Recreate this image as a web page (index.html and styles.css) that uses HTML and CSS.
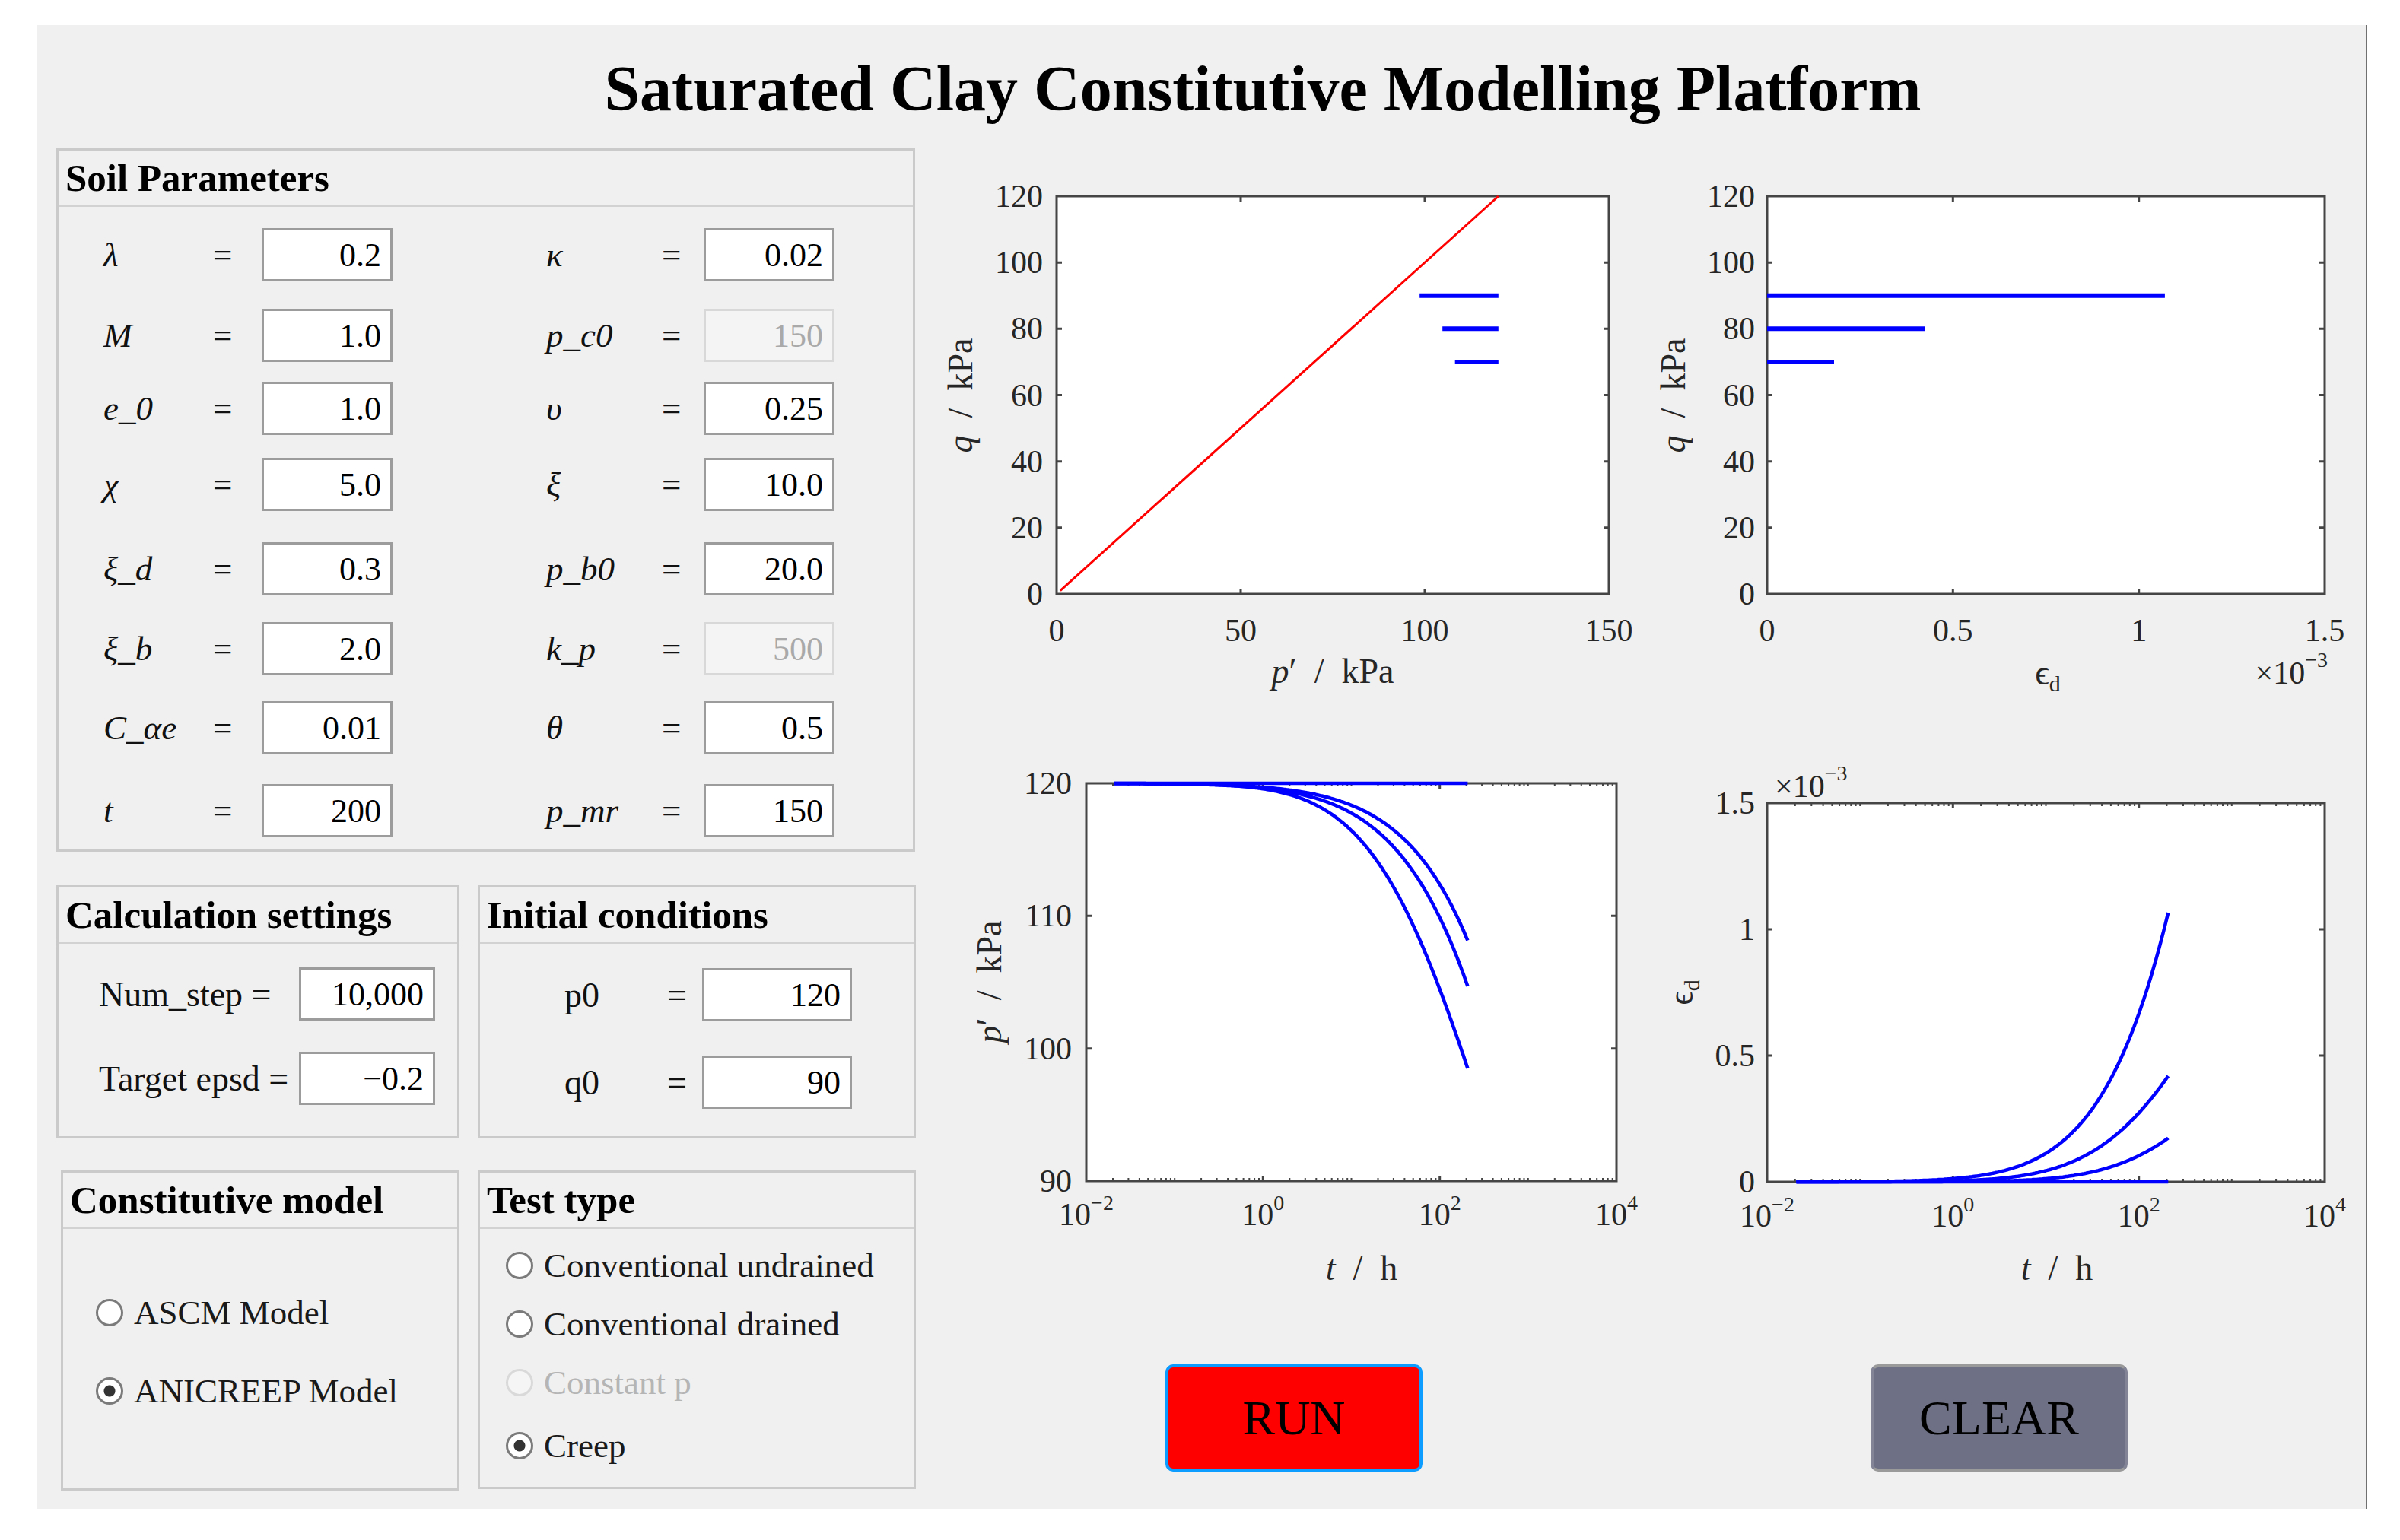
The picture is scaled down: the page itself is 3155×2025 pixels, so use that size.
FILE: index.html
```html
<!DOCTYPE html>
<html lang="en">
<head>
    <meta charset="UTF-8">
    <title>Saturated Clay Constitutive Modelling Platform</title>
    <link rel="stylesheet" href="styles.css">
</head>
<body>
<div class="window">
    <h1 class="title">Saturated Clay Constitutive Modelling Platform</h1>
    <div class="content">
        <div class="left">
            <div class="group soil">
                <div class="group-title">Soil Parameters</div>
                <div class="pgrid">
                    <span class="sym">λ</span><span class="eq">=</span><input class="num" value="0.2">
                    <span class="sym r">κ</span><span class="eq">=</span><input class="num" value="0.02">

                    <span class="sym">M</span><span class="eq">=</span><input class="num" value="1.0">
                    <span class="sym r">p_c0</span><span class="eq">=</span><input class="num" value="150" disabled>

                    <span class="sym">e_0</span><span class="eq">=</span><input class="num" value="1.0">
                    <span class="sym r">υ</span><span class="eq">=</span><input class="num" value="0.25">

                    <span class="sym">χ</span><span class="eq">=</span><input class="num" value="5.0">
                    <span class="sym r">ξ</span><span class="eq">=</span><input class="num" value="10.0">

                    <span class="sym">ξ_d</span><span class="eq">=</span><input class="num" value="0.3">
                    <span class="sym r">p_b0</span><span class="eq">=</span><input class="num" value="20.0">

                    <span class="sym">ξ_b</span><span class="eq">=</span><input class="num" value="2.0">
                    <span class="sym r">k_p</span><span class="eq">=</span><input class="num" value="500" disabled>

                    <span class="sym">C_αe</span><span class="eq">=</span><input class="num" value="0.01">
                    <span class="sym r">θ</span><span class="eq">=</span><input class="num" value="0.5">

                    <span class="sym">t</span><span class="eq">=</span><input class="num" value="200">
                    <span class="sym r">p_mr</span><span class="eq">=</span><input class="num" value="150">
                </div>
            </div>

            <div class="pair">
                <div class="group calc">
                    <div class="group-title">Calculation settings</div>
                    <div class="cgrid">
                        <span class="lbl">Num_step =</span><input class="num wide" value="10,000">
                        <span class="lbl">Target epsd =</span><input class="num wide" value="−0.2">
                    </div>
                </div>
                <div class="group init">
                    <div class="group-title">Initial conditions</div>
                    <div class="igrid">
                        <span class="lbl">p0</span><span class="lbl">=</span><input class="num wider" value="120">
                        <span class="lbl">q0</span><span class="lbl">=</span><input class="num wider" value="90">
                    </div>
                </div>
            </div>

            <div class="pair low">
                <div class="group model">
                    <div class="group-title">Constitutive model</div>
                    <div class="radios model-list">
                        <label class="radio"><input type="radio" name="model">ASCM Model</label>
                        <label class="radio"><input type="radio" name="model" checked>ANICREEP Model</label>
                    </div>
                </div>
                <div class="group test">
                    <div class="group-title">Test type</div>
                    <div class="radios test-list">
                        <label class="radio"><input type="radio" name="test">Conventional undrained</label>
                        <label class="radio"><input type="radio" name="test">Conventional drained</label>
                        <label class="radio off"><input type="radio" name="test" disabled>Constant p</label>
                        <label class="radio last"><input type="radio" name="test" checked>Creep</label>
                    </div>
                </div>
            </div>
        </div>

        <div class="right">
            <div class="plots">
                <!-- q vs p' -->
                <svg class="plot" width="950" height="770" viewBox="0 0 950 770">
                    <rect class="bg" x="174" y="38" width="726" height="523"/>
                    <path class="tick" d="M174 473.8h7M174 386.7h7M174 299.5h7M174 212.3h7M174 125.2h7M900 473.8h-7M900 386.7h-7M900 299.5h-7M900 212.3h-7M900 125.2h-7M416 561v-7M658 561v-7M416 38v7M658 38v7"/>
                    <rect class="box" x="174" y="38" width="726" height="523"/>
                    <g class="ylab" text-anchor="end">
                        <text x="156" y="575">0</text>
                        <text x="156" y="488">20</text>
                        <text x="156" y="401">40</text>
                        <text x="156" y="314">60</text>
                        <text x="156" y="226">80</text>
                        <text x="156" y="139">100</text>
                        <text x="156" y="52">120</text>
                    </g>
                    <g class="xlab" text-anchor="middle">
                        <text x="174" y="623">0</text>
                        <text x="416" y="623">50</text>
                        <text x="658" y="623">100</text>
                        <text x="900" y="623">150</text>
                    </g>
                    <text class="alabel" x="537" y="678" text-anchor="middle"><tspan font-style="italic">p</tspan>′&#160; /&#160; kPa</text>
                    <text class="alabel" transform="translate(63,300) rotate(-90)" text-anchor="middle"><tspan font-style="italic">q</tspan>&#160; /&#160; kPa</text>
                    <path class="red" d="M178.8 556.6L754.8 38"/>
                    <path class="blue thick" d="M651.2 168.8H754.8M681.2 212.3H754.8M697.7 255.9H754.8"/>
                </svg>

                <!-- q vs eps_d -->
                <svg class="plot" width="935" height="770" viewBox="0 0 935 770">
                    <rect class="bg" x="158" y="38" width="733" height="523"/>
                    <path class="tick" d="M158 473.8h7M158 386.7h7M158 299.5h7M158 212.3h7M158 125.2h7M891 473.8h-7M891 386.7h-7M891 299.5h-7M891 212.3h-7M891 125.2h-7M402.3 561v-7M646.7 561v-7M402.3 38v7M646.7 38v7"/>
                    <rect class="box" x="158" y="38" width="733" height="523"/>
                    <g class="ylab" text-anchor="end">
                        <text x="142" y="575">0</text>
                        <text x="142" y="488">20</text>
                        <text x="142" y="401">40</text>
                        <text x="142" y="314">60</text>
                        <text x="142" y="226">80</text>
                        <text x="142" y="139">100</text>
                        <text x="142" y="52">120</text>
                    </g>
                    <g class="xlab" text-anchor="middle">
                        <text x="158" y="623">0</text>
                        <text x="402.3" y="623">0.5</text>
                        <text x="646.7" y="623">1</text>
                        <text x="891" y="623">1.5</text>
                    </g>
                    <text class="alabel" x="527" y="680" text-anchor="middle">ϵ<tspan class="sub" dy="9">d</tspan></text>
                    <text class="xlab" x="895" y="679" text-anchor="end">×10<tspan class="sup" dy="-22">−3</tspan></text>
                    <text class="alabel" transform="translate(50,300) rotate(-90)" text-anchor="middle"><tspan font-style="italic">q</tspan>&#160; /&#160; kPa</text>
                    <path class="blue thick" d="M158 168.8H680.9M158 212.3H365.2M158 255.9H246"/>
                </svg>

                <!-- p' vs t -->
                <svg class="plot" width="950" height="740" viewBox="0 0 950 740">
                    <rect class="bg" x="213" y="40" width="697" height="523"/>
                    <path class="tick" d="M213 388.7h7M213 214.3h7M910 388.7h-7M910 214.3h-7M445.3 563v-7M677.7 563v-7M445.3 40v7M677.7 40v7"/>
                    <path class="tick thin" id="m3"/>
                    <rect class="box" x="213" y="40" width="697" height="523"/>
                    <g class="ylab" text-anchor="end">
                        <text x="194" y="577">90</text>
                        <text x="194" y="403">100</text>
                        <text x="194" y="228">110</text>
                        <text x="194" y="54">120</text>
                    </g>
                    <g class="xlab" text-anchor="middle">
                        <text x="213" y="621">10<tspan class="sup" dy="-20">−2</tspan></text>
                        <text x="445.3" y="621">10<tspan class="sup" dy="-20">0</tspan></text>
                        <text x="677.7" y="621">10<tspan class="sup" dy="-20">2</tspan></text>
                        <text x="910" y="621">10<tspan class="sup" dy="-20">4</tspan></text>
                    </g>
                    <text class="alabel" x="575" y="693" text-anchor="middle"><tspan font-style="italic">t</tspan>&#160; /&#160; h</text>
                    <text class="alabel" transform="translate(101,301) rotate(-90)" text-anchor="middle"><tspan font-style="italic">p</tspan>′&#160; /&#160; kPa</text>
                    <g class="blue">
                        <path id="c3a"/><path id="c3b"/><path id="c3c"/><path id="c3d"/>
                    </g>
                </svg>

                <!-- eps_d vs t -->
                <svg class="plot" width="935" height="740" viewBox="0 0 935 740">
                    <rect class="bg" x="158" y="66" width="733" height="498"/>
                    <path class="tick" d="M158 398h7M158 232h7M891 398h-7M891 232h-7M402.3 564v-7M646.7 564v-7M402.3 66v7M646.7 66v7"/>
                    <path class="tick thin" id="m4"/>
                    <rect class="box" x="158" y="66" width="733" height="498"/>
                    <g class="ylab" text-anchor="end">
                        <text x="142" y="578">0</text>
                        <text x="142" y="412">0.5</text>
                        <text x="142" y="246">1</text>
                        <text x="142" y="80">1.5</text>
                    </g>
                    <text class="xlab" x="168" y="58">×10<tspan class="sup" dy="-22">−3</tspan></text>
                    <g class="xlab" text-anchor="middle">
                        <text x="158" y="623">10<tspan class="sup" dy="-20">−2</tspan></text>
                        <text x="402.3" y="623">10<tspan class="sup" dy="-20">0</tspan></text>
                        <text x="646.7" y="623">10<tspan class="sup" dy="-20">2</tspan></text>
                        <text x="891" y="623">10<tspan class="sup" dy="-20">4</tspan></text>
                    </g>
                    <text class="alabel" x="539" y="693" text-anchor="middle"><tspan font-style="italic">t</tspan>&#160; /&#160; h</text>
                    <text class="alabel" transform="translate(60,315) rotate(-90)" text-anchor="middle">ϵ<tspan class="sub" dy="9">d</tspan></text>
                    <g class="blue">
                        <path id="c4a"/><path id="c4b"/><path id="c4c"/><path id="c4d"/>
                    </g>
                </svg>
            </div>

            <div class="buttons">
                <button class="btn run">RUN</button>
                <button class="btn clear">CLEAR</button>
            </div>
        </div>
    </div>
</div>

<script>
    // creep runs from t = 10^-1.685 h to 10^2.316 h; each curve is fitted as
    // ln(v) = a + b*du + c*du^2 with du = log10(t) - 2.316
    var U0 = -1.685, U1 = 2.316;

    function curvePath(toX, toY, fit) {
        var d = '';
        for (var i = 0; i <= 240; i++) {
            var u = U0 + (U1 - U0) * i / 240;
            var du = u - U1;
            var v = fit ? Math.exp(fit[0] + fit[1] * du + fit[2] * du * du) : 0;
            d += (i ? 'L' : 'M') + toX(u).toFixed(1) + ' ' + toY(v).toFixed(1);
        }
        return d;
    }

    function minorTicks(x0, w, top, bottom) {
        var d = '';
        for (var k = -2; k < 4; k++) {
            for (var m = 1; m <= 9; m++) {
                if (m === 1 && k % 2 === 0) continue;
                var x = (x0 + (k + 2 + Math.log10(m)) / 6 * w).toFixed(1);
                d += 'M' + x + ' ' + bottom + 'v-4M' + x + ' ' + top + 'v4';
            }
        }
        return d;
    }

    document.getElementById('m3').setAttribute('d', minorTicks(213, 697, 40, 563));
    document.getElementById('m4').setAttribute('d', minorTicks(158, 733, 66, 564));

    // drop of p' below 120 kPa
    var pFits = [null, [2.473, 1.3661, -0.0998], [2.728, 1.2564, -0.1522], [3.068, 0.9217, -0.3379]];
    ['c3a', 'c3b', 'c3c', 'c3d'].forEach(function (id, i) {
        document.getElementById(id).setAttribute('d', curvePath(
            function (u) { return 213 + (u + 2) / 6 * 697; },
            function (v) { return 40 + v / 30 * 523; },
            pFits[i]));
    });

    // deviatoric strain, x1e-3
    var eFits = [null, [0.064, 1.4224, -0.2154], [-0.870, 1.248, -0.3533], [-1.754, 1.506, -0.386]];
    ['c4a', 'c4b', 'c4c', 'c4d'].forEach(function (id, i) {
        document.getElementById(id).setAttribute('d', curvePath(
            function (u) { return 158 + (u + 2) / 6 * 733; },
            function (v) { return 564 - v / 1.5 * 498; },
            eFits[i]));
    });
</script>
</body>
</html>
```

FILE: styles.css
```css
body {
    margin: 0;
    background: #fff;
    font-family: "Liberation Serif", "DejaVu Serif", serif;
    color: #111;
}
.window {
    display: flex;
    flex-direction: column;
    margin: 33px 0 0 48px;
    width: 3062px;
    height: 1951px;
    background: #f0f0f0;
    border-right: 2px solid #707070;
}
.title {
    margin: 42px 0 36px;
    padding-left: 162px;
    font-size: 84px;
    line-height: 84px;
    font-weight: bold;
    text-align: center;
    color: #000;
}
.content {
    display: flex;
    gap: 11px;
    padding-left: 26px;
}
.left {
    width: 1130px;
    flex: none;
}
.group {
    box-sizing: border-box;
    border: 3px solid #cacaca;
}
.group-title {
    height: 72px;
    line-height: 72px;
    padding-left: 9px;
    border-bottom: 2px solid #d2d2d2;
    font-size: 51px;
    font-weight: bold;
    color: #000;
    white-space: nowrap;
}
.soil {
    width: 1129px;
    height: 925px;
}
.pgrid {
    display: grid;
    grid-template-columns: 134px 74px 172px 344px 65px 172px;
    grid-template-rows: 106px 96px 100px 111px 105px 104px 109px 70px;
    padding: 28px 0 0 59px;
}
.pgrid > span {
    display: flex;
    align-items: center;
    height: 70px;
    font-size: 45px;
    white-space: nowrap;
}
.sym {
    font-style: italic;
}
.sym.r {
    padding-left: 202px;
}
.eq {
    padding-left: 10px;
}
.num {
    box-sizing: border-box;
    width: 172px;
    height: 70px;
    margin: 0;
    padding: 0 12px;
    border: 3px solid #9c9c9c;
    background: #fff;
    font: 44px "Liberation Serif", serif;
    color: #000;
    text-align: right;
}
.num:disabled {
    background: #f4f4f4;
    border-color: #d8d8d8;
    color: #a9a9a9;
    -webkit-text-fill-color: #a9a9a9;
}
.num.wide {
    width: 179px;
}
.num.wider {
    width: 197px;
}
.pair {
    display: flex;
    gap: 24px;
    margin-top: 44px;
}
.pair.low {
    margin-top: 42px;
}
.calc {
    width: 530px;
    height: 333px;
}
.init {
    width: 576px;
    height: 333px;
}
.lbl {
    display: flex;
    align-items: center;
    height: 70px;
    font-size: 46px;
    white-space: nowrap;
}
.cgrid {
    display: grid;
    grid-template-columns: 263px 179px;
    grid-template-rows: 111px 70px;
    padding: 31px 0 0 53px;
}
.igrid {
    display: grid;
    grid-template-columns: 135px 46px 197px;
    grid-template-rows: 115px 70px;
    padding: 32px 0 0 111px;
}
.model {
    width: 524px;
    height: 421px;
    margin-left: 6px;
}
.test {
    width: 576px;
    height: 419px;
}
.radios {
    display: flex;
    flex-direction: column;
}
.model-list {
    gap: 53px;
    padding: 85px 0 0 43px;
}
.test-list {
    gap: 27px;
    padding: 23px 0 0 34px;
}
.radio {
    display: flex;
    align-items: center;
    gap: 14px;
    height: 50px;
    font-size: 45px;
    color: #1a1a1a;
    white-space: nowrap;
}
.radio.last {
    margin-top: 6px;
}
.radio.off {
    color: #b5b5b5;
}
.radio input {
    -webkit-appearance: none;
    appearance: none;
    flex: none;
    width: 36px;
    height: 36px;
    margin: 0;
    border: 3px solid #7b7b7b;
    border-radius: 50%;
    background: #fff;
}
.radio input:checked {
    background: radial-gradient(circle, #333 0 7px, #fff 8px);
}
.radio input:disabled {
    border-color: #d9d9d9;
    background: #f5f5f5;
}
.right {
    display: flex;
    flex-direction: column;
    padding-top: 25px;
}
.plots {
    display: grid;
    grid-template-columns: 950px 935px;
    grid-template-rows: 770px 740px;
}
.plot {
    display: block;
}
.plot text {
    font-family: "Liberation Serif", "DejaVu Serif", serif;
    fill: #262626;
}
.plot .bg {
    fill: #fff;
}
.plot .box {
    fill: none;
    stroke: #454545;
    stroke-width: 3;
}
.plot .tick {
    fill: none;
    stroke: #454545;
    stroke-width: 3;
}
.plot .tick.thin {
    stroke-width: 2;
}
.ylab text,
.xlab text,
text.xlab {
    font-size: 42px;
}
.plot .sup {
    font-size: 28px;
}
.plot .sub {
    font-size: 30px;
}
.plot .alabel {
    font-size: 46px;
}
.blue path,
path.blue {
    fill: none;
    stroke: #0000ff;
    stroke-width: 4.5;
}
path.blue.thick {
    stroke-width: 6;
}
.red {
    fill: none;
    stroke: #ff0000;
    stroke-width: 3;
}
.buttons {
    display: flex;
    gap: 589px;
    margin-top: 64px;
    padding-left: 317px;
}
.btn {
    box-sizing: border-box;
    width: 338px;
    height: 141px;
    border-radius: 10px;
    font: 64px "Liberation Serif", serif;
    color: #000;
    cursor: pointer;
}
.run {
    background: #ff0000;
    border: 4px solid #0d9cff;
}
.clear {
    background: #6e7185;
    border: 4px solid #9a9a9a;
    border-left-color: #838596;
    border-right-color: #838596;
}
```
